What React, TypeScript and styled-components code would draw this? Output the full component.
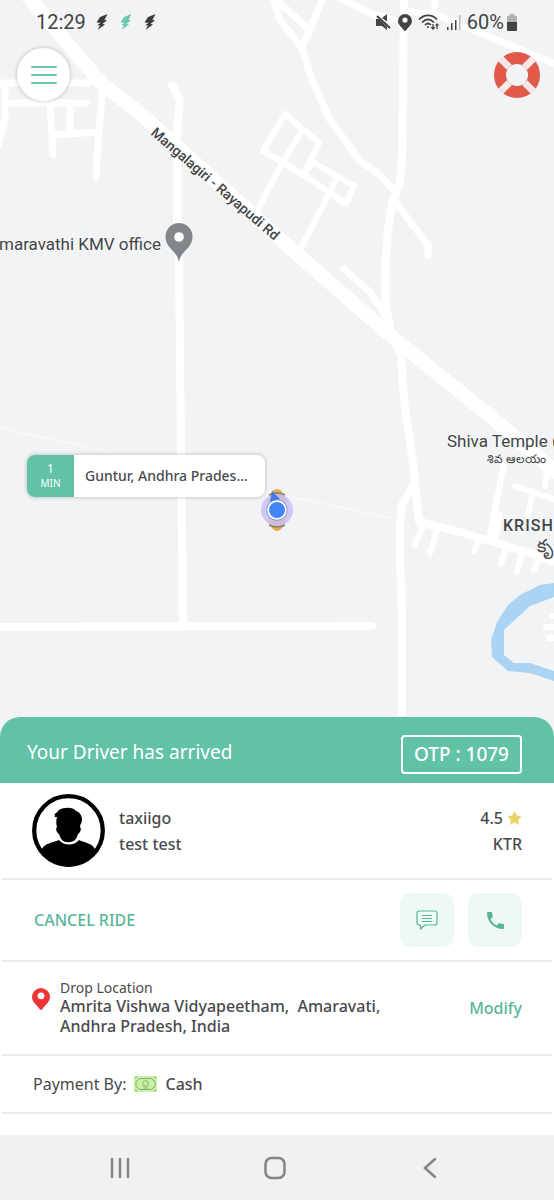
import React from "react";
import styled, { createGlobalStyle } from "styled-components";

const green = "#62c2a7";
const ink = "#4a4a4e";

const GlobalStyle = createGlobalStyle`
  *, *::before, *::after { box-sizing: border-box; }
  body { margin: 0; background: #ffffff; }
  button { font: inherit; color: inherit; border: 0; padding: 0; background: none; cursor: pointer; }
  svg { display: block; flex: none; }
`;

const Screen = styled.div`
  min-height: 100vh;
  display: flex;
  flex-direction: column;
  font-family: "Noto Sans", "Open Sans", sans-serif;
  color: ${ink};
  overflow-x: hidden;
`;

const MapArea = styled.main`
  position: relative;
  flex: 1 0 480px;
  overflow: hidden;
  background: #f1f3f4;
`;

const MapCanvas = styled.svg`
  position: absolute;
  inset: 0;
  width: 100%;
  height: 100%;
`;

const StatusBar = styled.header`
  position: relative;
  display: flex;
  align-items: center;
  justify-content: space-between;
  height: 44px;
  padding: 0 36px;
  font-family: Roboto, sans-serif;
  font-size: 20px;
  line-height: 24px;
  color: #434446;
`;

const StatusGroup = styled.div<{ $gap: number }>`
  display: flex;
  align-items: center;
  gap: ${(p) => p.$gap}px;
`;

const TopControls = styled.div`
  position: relative;
  display: flex;
  align-items: center;
  justify-content: space-between;
  padding: 4px 13px 0 17px;
`;

const MenuButton = styled.button`
  display: grid;
  place-items: center;
  width: 53px;
  height: 53px;
  border-radius: 50%;
  background: #ffffff;
  box-shadow: 0 0 4px rgba(0, 0, 0, 0.25);
`;

const TripTag = styled.button`
  position: absolute;
  left: 27px;
  top: 455px;
  display: flex;
  height: 42px;
  border-radius: 8px;
  overflow: hidden;
  background: #ffffff;
  box-shadow: 0 0 4px rgba(0, 0, 0, 0.25);
`;

const TripEta = styled.span`
  display: flex;
  flex-direction: column;
  justify-content: center;
  width: 47px;
  background: ${green};
  color: #ffffff;
  font-size: 10px;
  line-height: 14px;
  text-align: center;
`;

const EtaNumber = styled.span`
  font-size: 12px;
`;

const TripPlace = styled.span`
  width: 191px;
  padding: 0 11px;
  font-size: 14px;
  font-weight: 500;
  line-height: 42px;
  text-align: left;
`;

const Sheet = styled.section`
  position: relative;
  margin-top: -20px;
  padding-bottom: 21px;
  border-radius: 20px 20px 0 0;
  background: #ffffff;
`;

const SheetHeader = styled.div`
  display: flex;
  align-items: center;
  justify-content: space-between;
  height: 66px;
  padding: 4px 32px 0 27px;
  border-radius: 20px 20px 0 0;
  background: ${green};
  color: #ffffff;
`;

const SheetTitle = styled.h1`
  margin: 0;
  font-size: 19px;
  font-weight: 400;
  line-height: 24px;
`;

const Otp = styled.div`
  height: 39px;
  padding: 0 11px;
  border: 2px solid #ffffff;
  border-radius: 4px;
  margin-top: 4px;
  font-size: 19px;
  font-weight: 500;
  line-height: 35px;
`;

const Row = styled.div<{ $height: number }>`
  display: flex;
  align-items: center;
  min-height: ${(p) => p.$height}px;
  margin: 0 2px;
  padding: 0 30px;
  border-bottom: 2px solid #ececed;
`;

const Lines = styled.div<{ $end?: boolean }>`
  display: flex;
  flex-direction: column;
  align-items: ${(p) => (p.$end ? "flex-end" : "flex-start")};
  margin-left: ${(p) => (p.$end ? "auto" : "14px")};
  font-size: 16px;
  font-weight: 500;
  line-height: 26px;
`;

const Rating = styled.span`
  display: flex;
  align-items: center;
  gap: 4px;
`;

const LinkButton = styled.button`
  color: #58b698;
  font-size: 16px;
  font-weight: 500;
  line-height: 24px;
  margin-left: 2px;
`;

const Actions = styled.div`
  display: flex;
  gap: 14px;
  margin-left: auto;
`;

const ActionButton = styled.button`
  display: grid;
  place-items: center;
  width: 54px;
  height: 54px;
  border-radius: 10px;
  background: #eef8f5;
`;

const Drop = styled.div`
  display: flex;
  align-items: flex-start;
  flex: 1;
  gap: 10px;
  padding-right: 60px;
`;

const DropPin = styled.span`
  padding-top: 8px;
`;

const Place = styled.div`
  flex: 1;
  font-size: 16px;
  font-weight: 500;
  line-height: 20px;
  white-space: pre-wrap;
`;

const PlaceLabel = styled.div`
  font-size: 14px;
  font-weight: 400;
  line-height: 16px;
`;

const Payment = styled.div`
  display: flex;
  align-items: center;
  gap: 8px;
  padding-left: 1px;
  font-size: 16px;
  line-height: 24px;
`;

const PaymentKind = styled.span`
  font-weight: 500;
`;

const NavBar = styled.nav`
  display: flex;
  align-items: center;
  justify-content: space-between;
  height: 65px;
  padding: 0 100px 0 96px;
  background: #f1f1f1;
`;

const NavButton = styled.button`
  display: grid;
  place-items: center;
  width: 48px;
  height: 48px;
`;

const Bolt = ({ color }: { color: string }) => (
  <svg width="12" height="16" viewBox="0 0 12 16" fill={color}>
    <path d="M11.500 0 4 3 .5 8.500 4.500 8.800 1.500 11 4 11.700 1.500 16 9 10.500 6.500 9.800 11 6.500 8.500 5.800Z" />
  </svg>
);

const MuteIcon = () => (
  <svg width="17" height="17" viewBox="0 0 17 17" fill="#434446">
    <path d="M1 5h3l8 8v3L7 12H1ZM7 4l5-4v7.500Z" />
    <path d="m2 2 13 12" stroke="#434446" strokeWidth="2" />
  </svg>
);

const PinIcon = ({ w, h, color, hole }: { w: number; h: number; color: string; hole: string }) => (
  <svg width={w} height={h} viewBox="0 0 18 22">
    <path d="M9 0a9 9 0 0 0-9 9c0 5 5 8 7.500 12a2 2 0 0 0 3 0C13 17 18 14 18 9a9 9 0 0 0-9-9Z" fill={color} />
    <circle cx="9" cy="7.800" r="3.400" fill={hole} />
  </svg>
);

const WifiIcon = () => (
  <svg width="22" height="17" viewBox="0 0 22 17" fill="none" stroke="#434446" strokeWidth="1.700">
    <path d="M1 5.500c5-5.500 13-5.500 18 0M4 8.500c4-4 8-4 12 0M7 11c2-2 4-2 6 0" />
    <circle cx="10" cy="13" r="1" fill="#434446" stroke="none" />
    <path d="M15 10v5M19 15v-5" strokeWidth="1.300" />
    <path d="m12.500 13 2.500 3 2.500-3ZM16.800 11.500 19 9l2.400 2.500Z" fill="#434446" stroke="none" />
  </svg>
);

const SignalIcon = () => (
  <svg width="15" height="16" viewBox="0 0 15 16" fill="#434446">
    <path d="M1 13h1.500v3H1zM5 9h1.500v7H5zM9 6h1.500v10H9z" />
    <path d="M13 1h1.500v15H13z" fill="#b4b6b8" />
  </svg>
);

const BatteryIcon = () => (
  <svg width="12" height="17" viewBox="0 0 12 17">
    <path d="M3.500 0h5v2H11v6H1V2h2.500z" fill="#b0b2b4" />
    <path d="M1 8h10v8a1 1 0 0 1-1 1H2a1 1 0 0 1-1-1z" fill="#434446" />
  </svg>
);

const LifebuoyIcon = () => (
  <svg width="48" height="48" viewBox="0 0 48 48" fill="none">
    <circle cx="24" cy="24" r="17" stroke="#e05a4b" strokeWidth="12" />
    <path d="m7.700 7.700 8.600 8.600M31.700 31.700l8.600 8.600M40.300 7.700l-8.600 8.600M16.300 31.700l-8.600 8.600" stroke="#f4e9e8" strokeWidth="7" />
  </svg>
);

const AvatarIcon = () => (
  <svg width="73" height="73" viewBox="0 0 73 73">
    <circle cx="36.500" cy="36.500" r="34.300" fill="#fff" stroke="#000" strokeWidth="4.300" />
    <path d="M22 23C24 22 23 21 22 20C24 20 25 18 27 16C32 13 41 13 44 17C48 18 50 22 50 26C50 29 48 30 48 33C50 35 48 39 46 40C45 43 44 45 43 46C39 49 33 49 30 46C29 45 28 43 27 40C25 39 23 35 25 33C24 30 24 26 25 23Z" />
    <path d="M10 55C13 49 20 49 27 46C32 52 42 52 47 46C53 49 60 49 63 55C60 66 48 72.500 36.500 72.500S13 66 10 55Z" />
  </svg>
);

const StarIcon = () => (
  <svg width="15" height="14" viewBox="0 0 24 23">
    <path d="m12 1 3.300 7 7.700 1-5.600 5.300 1.400 7.700L12 18.300 5.200 22l1.400-7.700L1 9l7.700-1Z" fill="#ebd06c" stroke="#ebd06c" strokeLinejoin="round" />
  </svg>
);

const ChatIcon = () => (
  <svg width="22" height="20" viewBox="0 0 22 20" fill="none" stroke="#58b698" strokeWidth="1.200">
    <path d="M3 1h16a2 2 0 0 1 2 2v10a2 2 0 0 1-2 2H9l-4.500 4v-4H3a2 2 0 0 1-2-2V3a2 2 0 0 1 2-2Z" strokeLinejoin="round" />
    <path d="M6 5.500h10M6 8.500h10M6 11.500h10" />
  </svg>
);

const PhoneIcon = () => (
  <svg width="17" height="17" viewBox="3 3 18 18" fill="#58b698">
    <path d="M20 15.500c-1.200 0-2.400-.2-3.600-.6-.3-.1-.7 0-1 .2l-2.200 2.200a15 15 0 0 1-6.600-6.600l2.200-2.200c.3-.3.400-.7.2-1C8.700 6.400 8.500 5.200 8.500 4c0-.6-.5-1-1-1H4c-.5 0-1 .4-1 1 0 9.400 7.600 17 17 17 .6 0 1-.5 1-1v-3.500c0-.5-.4-1-1-1Z" />
  </svg>
);

const CashIcon = () => (
  <svg width="23" height="16" viewBox="0 0 23 16" fill="none" stroke="#7db560" strokeWidth="1">
    <path d="M0 0h23v16H0z" fill="#c8f0a8" stroke="none" />
    <path d="M6 2.500h11l4 3v5l-4 3H6l-4-3v-5ZM9 12h5" />
    <circle cx="11.500" cy="7.500" r="2.800" />
    <path d="M1 1.500h2M20 1.500h2M1 14.500h2M20 14.500h2" />
  </svg>
);

const CityMap = () => (
  <MapCanvas viewBox="0 0 554 737" preserveAspectRatio="xMinYMin slice" role="img" aria-label="Map around the pickup point">
    <path
      d="M554 583 540 585 520 595 508 605 497 622 491 640 492 657 508 671 530 673 554 681V671L530 663 514 663 504 655 504 630 530 606 554 597Z"
      fill="#abd4f4"
    />
    <g fill="none" stroke="#ffffff" strokeLinejoin="round" strokeLinecap="round">
      <path d="M0 428 110 452M266 492 392 518" strokeWidth="1" strokeDasharray="5 2" />
      <g strokeWidth="7">
        <path d="M-4 83H88L102 77M5 86V118L-2 146M5 103H86M50 103 53 155M70 103V132M53 135 98 132M103 84 99 130 96 177" />
        <path d="M274 0 280 20 302 48 312 80 330 120 345 140 360 161 380 175 395 192M276 0 308 28M324-4 302 48M396 203 415 228 428 245V256" />
        <path d="M338-3 372 14 394 20M436-2 433 16M404 10 440 16 480 33 556 64" />
        <path d="M344 269 370 292 388 320" />
      </g>
      <g strokeWidth="6">
        <path d="m285 114 34 29-16 32-40-24 22-37M301 132l-20 33-24 46M264 151l40 24 42 29 8-18-40-23M302 175l12-13M335 182l-9 18-24 46" />
        <path d="M504 464 490 535M422 528 415 545M437 530 430 553M480 540 474 551M506 548 501 564M523 550 517 572M540 555 534 570M515 486 556 500M548 465 545 486M533 492 528 515M500 515 495 540" />
        <path d="M552 616H560M546 627H560M549 638H560" />
      </g>
      <path d="M172 85 180 100 177 125V215L179 262 181 450 183 625M-4 627 372 626" strokeWidth="8" />
      <path
        d="M404-4 403 100 402 160 400 182 393 200 388 230 385 270V300L391 334 401 355 404 400 412 455 415 485 419 521 431 525 460 532 490 541 530 553 556 562M413 486 402 505 400 525 400 560 402 610V740"
        strokeWidth="8"
      />
      <path d="M26-6 100 82 143 116 290 248 397 341 490 416 556 472" strokeWidth="14" />
    </g>
    <path d="M179 262c-2-12-13.500-13-13.500-25.500a13.500 13.500 0 0 1 27 0c0 12.500-11.500 13.500-13.500 25.500Z" fill="#80868b" />
    <circle cx="179" cy="237" r="4.800" fill="#ffffff" />
    <g fontFamily="Roboto, sans-serif" fill="#434446" stroke="#f8f9fa" strokeWidth="2" paintOrder="stroke">
      <text x="161" y="250" fontSize="17" textAnchor="end">maravathi KMV office</text>
      <text transform="translate(150 134) rotate(40.700)" fontSize="14" fontWeight="500">Mangalagiri - Rayapudi Rd</text>
      <text x="447" y="447" fontSize="17">Shiva Temple (</text>
      <text x="487" y="463" fontSize="12">శివ ఆలయం</text>
      <text x="503" y="531" fontSize="16" fontWeight="500" letterSpacing="1">KRISH</text>
      <text x="537" y="552" fontSize="18">కృ</text>
    </g>
    <ellipse cx="277" cy="510" rx="10" ry="21" fill="#e3ad4c" />
    <path d="M269 495q8-4 16 0M269 525q8 4 16 0" stroke="#8a8074" strokeWidth="1.500" fill="none" />
    <circle cx="277" cy="510" r="16" fill="#c9c0f7" fillOpacity=".85" />
    <path d="m272 491 8 8-10 3Z" fill="#3d7be6" />
    <circle cx="277" cy="510" r="9" fill="#4285f4" stroke="#ffffff" strokeWidth="2" />
    <circle cx="277" cy="510" r="10.300" fill="none" stroke="#6d83c0" strokeWidth=".7" />
  </MapCanvas>
);

export default function App() {
  return (
    <Screen>
      <GlobalStyle />
      <MapArea>
        <CityMap />
        <StatusBar>
          <StatusGroup $gap={12}>
            <StatusGroup $gap={10}>
              <span>12:29</span>
              <Bolt color="#3c3d3f" />
            </StatusGroup>
            <Bolt color="#6cc9ae" />
            <Bolt color="#3c3d3f" />
          </StatusGroup>
          <StatusGroup $gap={6}>
            <MuteIcon />
            <PinIcon w={14} h={17} color="#434446" hole="#f1f3f4" />
            <WifiIcon />
            <SignalIcon />
            <StatusGroup $gap={2}>
              <span>60%</span>
              <BatteryIcon />
            </StatusGroup>
          </StatusGroup>
        </StatusBar>
        <TopControls>
          <MenuButton aria-label="Menu">
            <svg width="26" height="20" viewBox="0 0 26 20" stroke="#6fc2ab" strokeWidth="2" strokeLinecap="round">
              <path d="M1 2h24M1 10h24M1 18h24" />
            </svg>
          </MenuButton>
          <button aria-label="Emergency help">
            <LifebuoyIcon />
          </button>
        </TopControls>
        <TripTag>
          <TripEta>
            <EtaNumber>1</EtaNumber>
            <span>MIN</span>
          </TripEta>
          <TripPlace>Guntur, Andhra Prades...</TripPlace>
        </TripTag>
      </MapArea>

      <Sheet>
        <SheetHeader>
          <SheetTitle>Your Driver has arrived</SheetTitle>
          <Otp>OTP : 1079</Otp>
        </SheetHeader>
        <Row $height={97}>
          <AvatarIcon />
          <Lines>
            <span>taxiigo</span>
            <span>test test</span>
          </Lines>
          <Lines $end>
            <Rating>
              4.5 <StarIcon />
            </Rating>
            <span>KTR</span>
          </Lines>
        </Row>
        <Row $height={82}>
          <LinkButton>CANCEL RIDE</LinkButton>
          <Actions>
            <ActionButton aria-label="Message driver">
              <ChatIcon />
            </ActionButton>
            <ActionButton aria-label="Call driver">
              <PhoneIcon />
            </ActionButton>
          </Actions>
        </Row>
        <Row $height={94}>
          <Drop>
            <DropPin>
              <PinIcon w={18} h={22} color="#ee3537" hole="#ffffff" />
            </DropPin>
            <Place>
              <PlaceLabel>Drop Location</PlaceLabel>
              {"Amrita Vishwa Vidyapeetham,  Amaravati, Andhra Pradesh, India"}
            </Place>
          </Drop>
          <LinkButton>Modify</LinkButton>
        </Row>
        <Row $height={58}>
          <Payment>
            Payment By:
            <CashIcon />
            <PaymentKind>Cash</PaymentKind>
          </Payment>
        </Row>
      </Sheet>

      <NavBar>
        <NavButton aria-label="Recent apps">
          <svg width="20" height="22" viewBox="0 0 20 22" stroke="#858585" strokeWidth="2.500" strokeLinecap="round">
            <path d="M2 2v18M10 2v18M18 2v18" />
          </svg>
        </NavButton>
        <NavButton aria-label="Home">
          <svg width="22" height="24" viewBox="0 0 22 24" fill="none" stroke="#858585" strokeWidth="2.500">
            <rect x="1.500" y="2" width="19" height="20" rx="6" />
          </svg>
        </NavButton>
        <NavButton aria-label="Back">
          <svg width="14" height="22" viewBox="0 0 14 22" fill="none" stroke="#858585" strokeWidth="2.500" strokeLinecap="round">
            <path d="M12 2 2 11l10 9" />
          </svg>
        </NavButton>
      </NavBar>
    </Screen>
  );
}
